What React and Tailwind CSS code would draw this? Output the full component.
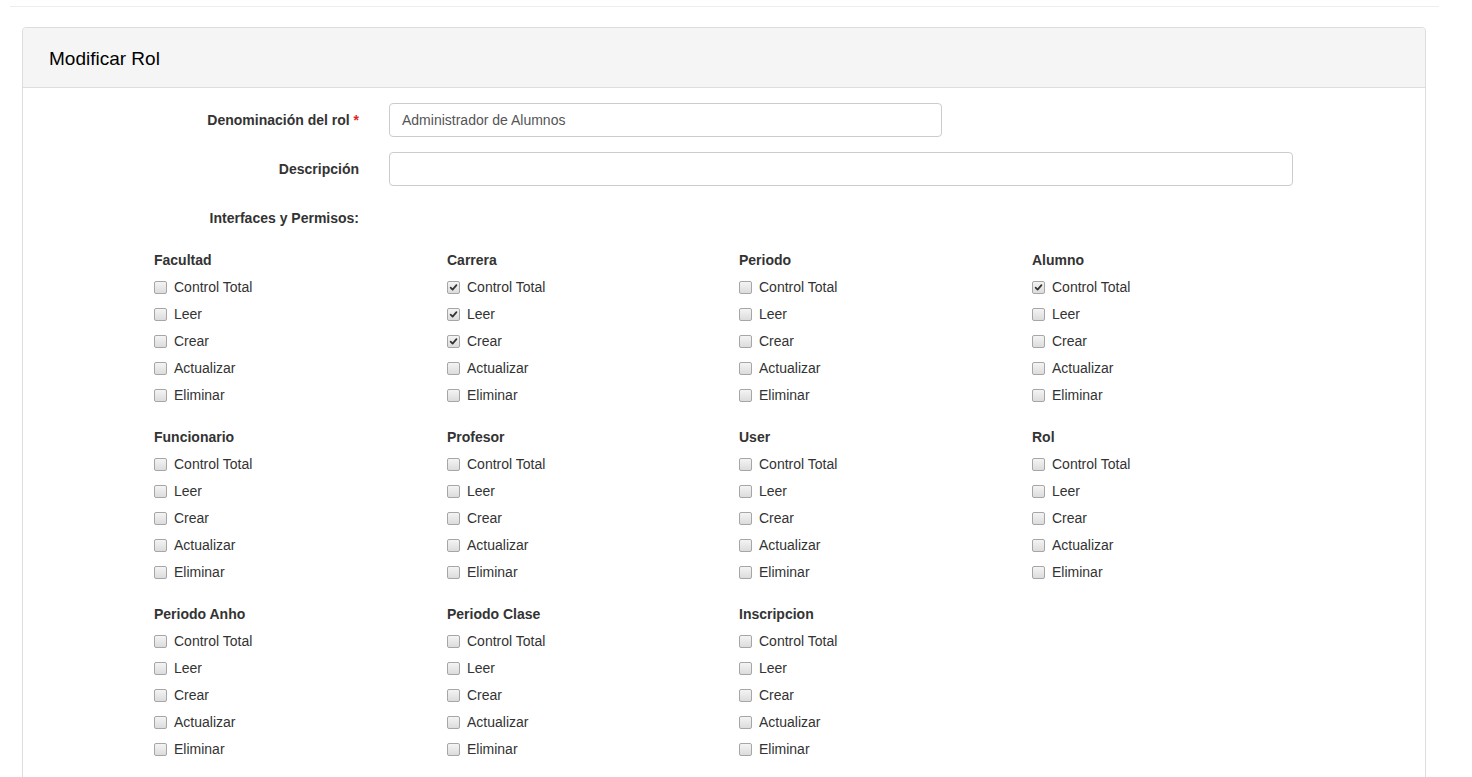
import React from 'react';

const groups = [
  { name: 'Facultad', checked: [] },
  { name: 'Carrera', checked: [0, 1, 2] },
  { name: 'Periodo', checked: [] },
  { name: 'Alumno', checked: [0] },
  { name: 'Funcionario', checked: [] },
  { name: 'Profesor', checked: [] },
  { name: 'User', checked: [] },
  { name: 'Rol', checked: [] },
  { name: 'Periodo Anho', checked: [] },
  { name: 'Periodo Clase', checked: [] },
  { name: 'Inscripcion', checked: [] },
];

const perms = ['Control Total', 'Leer', 'Crear', 'Actualizar', 'Eliminar'];

function Check({ on }) {
  return (
    <span className="relative flex h-[13px] w-[13px] shrink-0 items-center justify-center rounded-[2px] border border-[#a6a6a6] bg-gradient-to-b from-[#f4f4f4] to-[#dcdcdc]">
      {on && (
        <svg viewBox="0 0 10 10" className="h-[9px] w-[9px]">
          <path d="M1.8 5.2 L4 7.4 L8.3 2.4" fill="none" stroke="#333" strokeWidth="1.9" strokeLinecap="round" strokeLinejoin="round" />
        </svg>
      )}
    </span>
  );
}

function Group({ group }) {
  return (
    <div className="mb-[15px]">
      <div className="flex h-[27px] items-center font-bold">{group.name}</div>
      {perms.map((p, i) => (
        <label key={p} className="flex h-[27px] items-center gap-[7px]">
          <Check on={group.checked.includes(i)} />
          <span>{p}</span>
        </label>
      ))}
    </div>
  );
}

export default function App() {
  return (
    <div className="h-[777px] w-[1472px] overflow-hidden bg-white text-[14px] text-[#333]" style={{ fontFamily: '"Liberation Sans", Arial, sans-serif' }}>
      <div className="ml-[10px] h-[7px] w-[1429px] border-b border-[#eee]" />

      <div className="ml-[22px] mt-[20px] w-[1404px] rounded-[4px] border border-[#ddd]">
        <div className="flex h-[60px] items-center rounded-t-[4px] border-b border-[#ddd] bg-[#f5f5f5] pl-[26px] pt-[3px] text-[19px] text-black">
          Modificar Rol
        </div>

        <div className="pb-[30px] pt-[15px]">
          <div className="mb-[15px] flex items-center gap-[30px]">
            <div className="w-[336px] text-right font-bold">
              Denominación del rol <span className="text-[#e02424]">*</span>
            </div>
            <div className="flex h-[34px] w-[553px] items-center rounded-[4px] border border-[#ccc] px-[12px] text-[#555]">
              Administrador de Alumnos
            </div>
          </div>

          <div className="mb-[15px] flex items-center gap-[30px]">
            <div className="w-[336px] text-right font-bold">Descripción</div>
            <div className="h-[34px] w-[904px] rounded-[4px] border border-[#ccc]" />
          </div>

          <div className="flex h-[31px] items-center gap-[30px] pt-[4px]">
            <div className="w-[336px] text-right font-bold">Interfaces y Permisos:</div>
          </div>

          <div className="mt-[15px] pl-[131px]">
            <div className="grid w-[1171px] grid-cols-[293px_292px_293px_293px]">
              {groups.map((g) => (
                <Group key={g.name} group={g} />
              ))}
            </div>
          </div>
        </div>
      </div>
    </div>
  );
}
